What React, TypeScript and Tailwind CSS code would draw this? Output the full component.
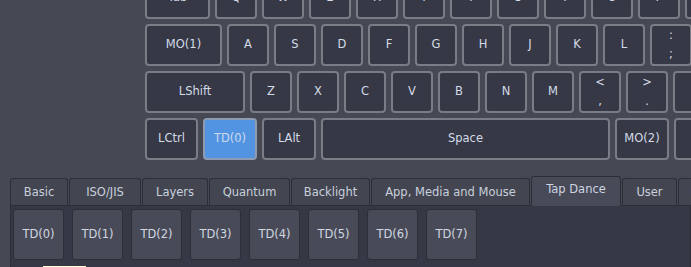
import React from "react";

type Key = { label: string; w?: number; sub?: string; active?: boolean };

const rows: Key[][] = [
  [
    { label: "Tab", w: 65 },
    { label: "Q" },
    { label: "W" },
    { label: "E" },
    { label: "R" },
    { label: "T" },
    { label: "Y" },
    { label: "U" },
    { label: "I" },
    { label: "O" },
    { label: "P" },
    { label: "{", sub: "[" },
  ],
  [
    { label: "MO(1)", w: 77 },
    { label: "A" },
    { label: "S" },
    { label: "D" },
    { label: "F" },
    { label: "G" },
    { label: "H" },
    { label: "J" },
    { label: "K" },
    { label: "L" },
    { label: ":", sub: ";" },
  ],
  [
    { label: "LShift", w: 100 },
    { label: "Z" },
    { label: "X" },
    { label: "C" },
    { label: "V" },
    { label: "B" },
    { label: "N" },
    { label: "M" },
    { label: "<", sub: "," },
    { label: ">", sub: "." },
    { label: "?", sub: "/" },
  ],
  [
    { label: "LCtrl", w: 53 },
    { label: "TD(0)", w: 54, active: true },
    { label: "LAlt", w: 54 },
    { label: "Space", w: 289 },
    { label: "MO(2)", w: 54 },
    { label: "Fn", w: 54 },
  ],
];

const tabs = [
  { name: "Basic", w: 58 },
  { name: "ISO/JIS", w: 72 },
  { name: "Layers", w: 66 },
  { name: "Quantum", w: 81 },
  { name: "Backlight", w: 79 },
  { name: "App, Media and Mouse", w: 159 },
  { name: "Tap Dance", w: 90, selected: true },
  { name: "User", w: 55 },
  { name: "Macro", w: 60 },
];

function KeyCap({ k }: { k: Key }) {
  return (
    <div
      style={{ width: k.w ?? 42 }}
      className={`shrink-0 h-[42px] rounded-[4px] border-2 flex flex-col items-center justify-center text-[11.5px] ${
        k.active
          ? "bg-[#5294e2] border-[#8e9bb0] text-[#cdd9ec]"
          : "bg-[#363845] border-[#7a7c86] text-[#d3dbe8]"
      } ${k.sub ? "leading-[19px]" : "leading-none"}`}
    >
      <span>{k.label}</span>
      {k.sub && <span>{k.sub}</span>}
    </div>
  );
}

export default function App() {
  return (
    <div
      className="relative w-[691px] h-[267px] overflow-hidden bg-[#464853]"
      style={{ fontFamily: '"DejaVu Sans", sans-serif' }}
    >
      <div className="flex flex-col gap-[5px] ml-[145px] -mt-[23px]">
        {rows.map((row, i) => (
          <div key={i} className="flex gap-[5px]">
            {row.map((k, j) => (
              <KeyCap key={j} k={k} />
            ))}
          </div>
        ))}
      </div>

      <div className="mt-[16px] flex items-end gap-[1px] pl-[10px] h-[29px] relative z-10">
        {tabs.map((t) =>
          t.selected ? (
            <div
              key={t.name}
              style={{ width: t.w }}
              className="shrink-0 h-[30px] -mb-[1px] rounded-t-[3px] border border-b-0 border-[#2c2e38] bg-[#484a57] flex items-center justify-center pb-[3px] text-[11.5px] text-[#ccd5e2]"
            >
              {t.name}
            </div>
          ) : (
            <div
              key={t.name}
              style={{ width: t.w }}
              className="shrink-0 h-[27px] rounded-t-[3px] border border-b-0 border-[#2c2e38] bg-[#434551] flex items-center justify-center pt-[2px] text-[11.5px] text-[#c8d0dc] whitespace-nowrap"
            >
              {t.name}
            </div>
          )
        )}
      </div>

      <div className="ml-[10px] h-[70px] border border-[#2c2e38] bg-[#363845] flex gap-[8px] pl-[2px] pt-[3px]">
        {Array.from({ length: 8 }, (_, i) => (
          <div
            key={i}
            className="shrink-0 w-[51px] h-[51px] rounded-[3px] border border-[#2c2e38] bg-[#484a57] flex items-center justify-center text-[11.5px] text-[#d0d7e2]"
          >
            TD({i})
          </div>
        ))}
      </div>

      <div className="absolute left-[43px] top-[266px] w-[43px] h-[10px] bg-[#ffffdc]" />
    </div>
  );
}
